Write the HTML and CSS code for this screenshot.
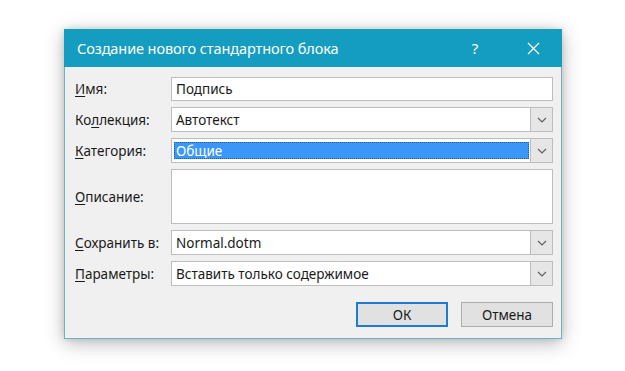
FILE: index.html
```html
<!DOCTYPE html>
<html lang="ru">
<head>
<meta charset="utf-8">
<link rel="stylesheet" href="styles.css">
</head>
<body>
<div class="stage">
  <div class="dialog">
    <div class="titlebar">
      <span class="title">Создание нового стандартного блока</span>
      <span class="help">?</span>
      <span class="close">
        <svg width="13" height="13" viewBox="0 0 13 13"><path d="M1 1 L12 12 M12 1 L1 12" stroke="#fff" stroke-width="1.3" fill="none"/></svg>
      </span>
    </div>
    <div class="body">
      <div class="form">
        <label class="lbl"><u>И</u>мя:</label>
        <div class="field text">Подпись</div>

        <label class="lbl">Ко<u>л</u>лекция:</label>
        <div class="field combo"><span class="val">Автотекст</span><span class="drop"><svg width="10" height="6" viewBox="0 0 10 6"><path d="M1 1 L5 5 L9 1" stroke="#606060" stroke-width="1.2" fill="none"/></svg></span></div>

        <label class="lbl"><u>К</u>атегория:</label>
        <div class="field combo"><span class="val sel">Общие</span><span class="drop"><svg width="10" height="6" viewBox="0 0 10 6"><path d="M1 1 L5 5 L9 1" stroke="#606060" stroke-width="1.2" fill="none"/></svg></span></div>

        <label class="lbl desc-lbl"><u>О</u>писание:</label>
        <div class="field area"></div>

        <label class="lbl"><u>С</u>охранить в:</label>
        <div class="field combo"><span class="val">Normal.dotm</span><span class="drop"><svg width="10" height="6" viewBox="0 0 10 6"><path d="M1 1 L5 5 L9 1" stroke="#606060" stroke-width="1.2" fill="none"/></svg></span></div>

        <label class="lbl"><u>П</u>араметры:</label>
        <div class="field combo"><span class="val">Вставить только содержимое</span><span class="drop"><svg width="10" height="6" viewBox="0 0 10 6"><path d="M1 1 L5 5 L9 1" stroke="#606060" stroke-width="1.2" fill="none"/></svg></span></div>
      </div>
      <div class="buttons">
        <button class="btn default">ОК</button>
        <button class="btn">Отмена</button>
      </div>
    </div>
  </div>
</div>
</body>
</html>
```
FILE: styles.css
```css
html, body {
  margin: 0;
  padding: 0;
  background: #ffffff;
}
.stage {
  width: 625px;
  height: 371px;
  padding: 29px 0 0 64px;
  box-sizing: border-box;
}
.dialog {
  width: 498px;
  height: 310px;
  box-sizing: border-box;
  border: 1px solid #6cb1c8;
  border-top: none;
  background: #f0f0f0;
  box-shadow: 0 4px 18px rgba(0,0,0,0.28), 0 0 6px rgba(0,0,0,0.12);
  font-family: "Noto Sans", "Open Sans", sans-serif;
  color: #1a1a1a;
  display: flex;
  flex-direction: column;
}
.titlebar {
  height: 38px;
  margin: 0 -1px;
  background: #149dc0;
  display: flex;
  align-items: center;
  color: #ffffff;
  padding-left: 13px;
}
.title {
  font-size: 14.5px;
  flex: 1;
  letter-spacing: -0.1px;
}
.help {
  font-size: 15px;
  width: 20px;
  text-align: center;
  margin-right: 38px;
}
.close {
  width: 20px;
  display: flex;
  justify-content: center;
  margin-right: 19px;
}
.body {
  padding: 10px 8px 0 10px;
  display: flex;
  flex-direction: column;
}
.form {
  display: grid;
  grid-template-columns: 96px 382px;
  grid-template-rows: 24px 25px 25px 55px 25px 25px;
  row-gap: 6px;
}
.lbl {
  font-size: 13.5px;
  display: flex;
  align-items: center;
  color: #1a1a1a;
}
.lbl u {
  text-underline-offset: 2px;
}
.field {
  box-sizing: border-box;
  background: #ffffff;
  border: 1px solid #bdbdbd;
  font-size: 13.5px;
  display: flex;
  align-items: center;
}
.text {
  padding-left: 4px;
}
.combo .val {
  flex: 1;
  padding-left: 4px;
  height: 100%;
  display: flex;
  align-items: center;
}
.combo .val.sel {
  background: #3b97f7;
  color: #ffffff;
  height: 17px;
  margin-left: 2px;
  margin-right: 1px;
  padding-left: 2px;
  outline: 1px dotted #1e5fa8;
  outline-offset: -1px;
}
.drop {
  width: 22px;
  height: 100%;
  box-sizing: border-box;
  border-left: 1px solid #bdbdbd;
  background: #e6e6e6;
  display: flex;
  align-items: center;
  justify-content: center;
}
.buttons {
  display: flex;
  justify-content: flex-end;
  gap: 13px;
  margin-top: 16px;
  padding-right: 0;
}
.btn {
  width: 92px;
  height: 25px;
  box-sizing: border-box;
  background: #e1e1e1;
  border: 1px solid #adadad;
  font-family: "Noto Sans", "Open Sans", sans-serif;
  font-size: 13.5px;
  color: #1a1a1a;
  padding: 0;
}
.btn.default {
  border: 2px solid #1e7bd0;
}
```
